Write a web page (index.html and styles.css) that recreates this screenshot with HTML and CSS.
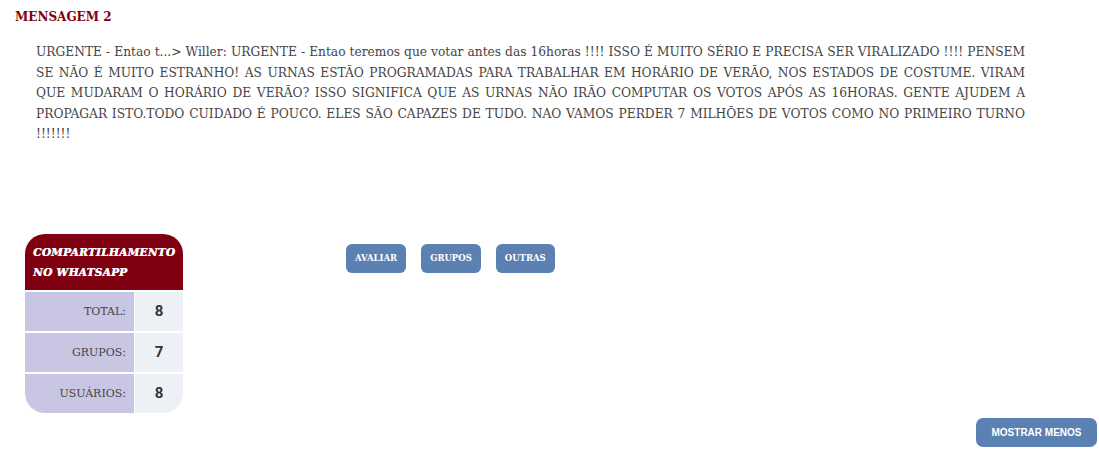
FILE: index.html
```html
<!DOCTYPE html>
<html lang="pt-BR">
<head>
  <meta charset="UTF-8" />
  <meta name="viewport" content="width=device-width, initial-scale=1.0"/>
  <title>Mensagem 2</title>
  <link rel="stylesheet" href="styles.css">
</head>
<body>
  <div class="mensagem">
    <h2 class="titulo">MENSAGEM 2</h2>
    <p class="texto">URGENTE - Entao t...&gt; Willer: URGENTE - Entao teremos que votar antes das 16horas !!!! ISSO É MUITO SÉRIO E PRECISA SER VIRALIZADO !!!! PENSEM SE NÃO É MUITO ESTRANHO! AS URNAS ESTÃO PROGRAMADAS PARA TRABALHAR EM HORÁRIO DE VERÃO, NOS ESTADOS DE COSTUME. VIRAM QUE MUDARAM O HORÁRIO DE VERÃO? ISSO SIGNIFICA QUE AS URNAS NÃO IRÃO COMPUTAR OS VOTOS APÓS AS 16HORAS. GENTE AJUDEM A PROPAGAR ISTO.TODO CUIDADO É POUCO. ELES SÃO CAPAZES DE TUDO. NAO VAMOS PERDER 7 MILHÕES DE VOTOS COMO NO PRIMEIRO TURNO !!!!!!!</p>

    <div class="rodape">
      <div class="card">
        <div class="card-titulo">COMPARTILHAMENTO NO WHATSAPP</div>
        <div class="linha">
          <span class="rotulo">TOTAL:</span>
          <span class="valor">8</span>
        </div>
        <div class="linha">
          <span class="rotulo">GRUPOS:</span>
          <span class="valor">7</span>
        </div>
        <div class="linha ultima">
          <span class="rotulo">USUÁRIOS:</span>
          <span class="valor">8</span>
        </div>
      </div>

      <div class="acoes">
        <button class="btn">AVALIAR</button>
        <button class="btn">GRUPOS</button>
        <button class="btn">OUTRAS</button>
      </div>
    </div>

    <div class="fim">
      <button class="btn btn-menos">MOSTRAR MENOS</button>
    </div>
  </div>
</body>
</html>
```

FILE: styles.css
```css
body {
  margin: 0;
  font-family: "DejaVu Serif", "Liberation Serif", serif;
  background: #fff;
  color: #555;
}

.mensagem {
  height: 454px;
  box-sizing: border-box;
  padding: 9px 2px 0 15px;
  display: flex;
  flex-direction: column;
}

.titulo {
  margin: 0;
  font-size: 12px;
  font-weight: bold;
  color: #7f0010;
  line-height: 16px;
}

.texto {
  margin: 16px 72px 0 21px;
  font-family: "DejaVu Serif Condensed", "DejaVu Serif", serif;
  font-size: 13.6px;
  line-height: 20.6px;
  text-align: justify;
  color: #444;
}

.rodape {
  display: flex;
  align-items: flex-start;
  margin-top: 90px;
  margin-left: 10px;
}

.card {
  width: 158px;
  border-radius: 20px;
  overflow: hidden;
  background: #fff;
}

.card-titulo {
  background: #7f0010;
  color: #fff;
  font-size: 10.5px;
  font-weight: 900;
  font-style: italic;
  line-height: 20px;
  padding: 8px 0 8px 8px;
  letter-spacing: 0.3px;
  text-shadow: 0.5px 0 0 #fff;
}

.linha {
  display: flex;
  height: 39px;
  margin-top: 2px;
}

.rotulo {
  width: 101px;
  background: #c9c6e4;
  text-align: right;
  padding-right: 8px;
  font-size: 11px;
  line-height: 39px;
  color: #444;
}

.valor {
  flex: 1;
  margin-left: 1px;
  background: #edf1f5;
  text-align: center;
  font-family: "Roboto", "Liberation Sans", sans-serif;
  font-weight: bold;
  font-size: 15px;
  line-height: 39px;
  color: #333;
}

.acoes {
  display: flex;
  gap: 15px;
  margin-left: 163px;
  margin-top: 10px;
}

.btn {
  background: #5b80b2;
  color: #fff;
  border: none;
  border-radius: 6px;
  height: 29px;
  padding: 0 9px;
  font-family: "DejaVu Serif", serif;
  font-weight: bold;
  font-size: 8.5px;
  cursor: pointer;
}

.fim {
  display: flex;
  justify-content: flex-end;
  margin-top: auto;
  padding-bottom: 7px;
}

.btn-menos {
  width: 121px;
  font-family: "Liberation Sans", Arial, sans-serif;
  font-size: 10px;
  border-radius: 7px;
}
```
